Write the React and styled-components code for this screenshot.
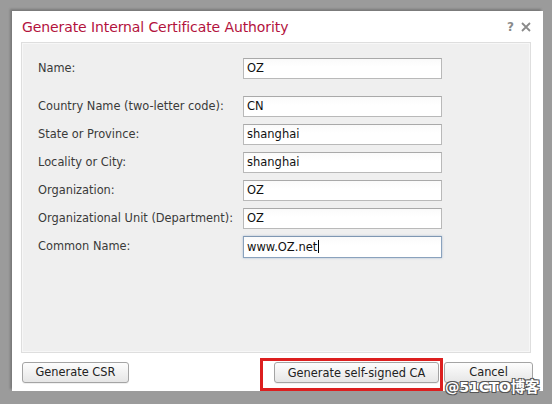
import React from "react";
import styled, { createGlobalStyle } from "styled-components";

const Global = createGlobalStyle`
  html, body { margin: 0; padding: 0; background: #9b9b9b; }
  body { width: 552px; height: 404px; overflow: hidden; font-family: "DejaVu Sans", Verdana, sans-serif; }
`;

const Page = styled.div`
  position: relative;
  width: 552px;
  height: 404px;
  padding: 11px 0 0 12px;
  box-sizing: border-box;
`;

const Dialog = styled.div`
  width: 531px;
  height: 380px;
  background: #ffffff;
  box-shadow: -2px -2px 2px rgba(60, 60, 60, 0.35);
  display: flex;
  flex-direction: column;
  box-sizing: border-box;
`;

const Header = styled.div`
  height: 31px;
  display: flex;
  align-items: center;
  justify-content: space-between;
  padding: 0 12px 0 10px;
  box-sizing: border-box;
`;

const Title = styled.h1`
  margin: 0;
  font-family: "DejaVu Sans", Verdana, sans-serif;
  font-weight: normal;
  font-size: 14px;
  color: #b3123d;
  letter-spacing: -0.1px;
  padding-top: 2px;
`;

const HeaderTools = styled.div`
  display: flex;
  align-items: center;
  gap: 7px;
  color: #8a8a8a;
  font-weight: bold;
  font-size: 12px;
  padding-top: 2px;
`;

const Panel = styled.div`
  margin: 0 12px 0 9px;
  height: 311px;
  background: #efefef;
  border: 1px solid #dedede;
  box-shadow: inset 0 0 0 1px #f7f7f7;
  box-sizing: border-box;
  padding: 15px 0 0 16px;
`;

const Form = styled.div`
  display: grid;
  grid-template-columns: 205px 199px;
  row-gap: 7px;
`;

const Label = styled.label`
  font-size: 11.4px;
  color: #3a3a3a;
  display: flex;
  align-items: center;
  height: 21px;
  white-space: nowrap;
  margin-top: ${p => (p.$gap ? "10px" : "0")};
`;

const Field = styled.div`
  height: ${p => (p.$focus ? "22px" : "21px")};
  box-sizing: border-box;
  border: 1px solid ${p => (p.$focus ? "#8aa2bd" : "#b9b9b9")};
  border-top-color: ${p => (p.$focus ? "#7f97b2" : "#a9a9a9")};
  box-shadow: ${p => (p.$focus ? "0 0 2px rgba(120,150,190,0.6)" : "none")};
  background: linear-gradient(#fafafa, #ffffff 40%);
  font-size: 11.5px;
  color: #111;
  display: flex;
  align-items: center;
  padding-left: 3px;
  margin-top: ${p => (p.$gap ? "10px" : "0")};
`;

const Caret = styled.span`
  display: inline-block;
  width: 1px;
  height: 13px;
  background: #000;
  margin-left: 1px;
`;

const Footer = styled.div`
  flex: 1;
  display: flex;
  justify-content: space-between;
  align-items: flex-start;
  padding: 5px 10px 0 10px;
`;

const Button = styled.button`
  height: 21px;
  width: ${p => p.$w}px;
  margin-top: ${p => p.$mt || 0}px;
  border: 1px solid #a4a4a4;
  border-radius: 3px;
  background: linear-gradient(#fdfdfd, #e6e6e6);
  box-shadow: 0 1px 0 rgba(0,0,0,0.06);
  font-family: "DejaVu Sans", Verdana, sans-serif;
  font-size: 11.4px;
  color: #222;
  padding: 0;
  cursor: pointer;
`;

const RightGroup = styled.div`
  display: flex;
  align-items: flex-start;
  gap: 1px;
`;

const Highlight = styled.div`
  border: 3px solid #dc1f1f;
  padding: 1px 1px 5px 11px;
`;

const Watermark = styled.div`
  position: absolute;
  left: 445px;
  top: 375px;
  font-family: "DejaVu Sans", "Noto Sans CJK SC", sans-serif;
  font-size: 14.5px;
  font-weight: bold;
  color: #ffffff;
  letter-spacing: -0.3px;
  text-shadow: -1px -1px 0 #555, 1px -1px 0 #555, -1px 1px 0 #555, 1px 1px 0 #555;
`;

const rows = [
  ["Name:", "OZ", false],
  ["Country Name (two-letter code):", "CN", true],
  ["State or Province:", "shanghai"],
  ["Locality or City:", "shanghai"],
  ["Organization:", "OZ"],
  ["Organizational Unit (Department):", "OZ"],
];

export default function App() {
  return (
    <Page>
      <Global />
      <Dialog>
        <Header>
          <Title>Generate Internal Certificate Authority</Title>
          <HeaderTools>
            <span>?</span>
            <svg width="10" height="10" viewBox="0 0 10 10">
              <path d="M1 1 L9 9 M9 1 L1 9" stroke="#8a8a8a" strokeWidth="1.8" />
            </svg>
          </HeaderTools>
        </Header>
        <Panel>
          <Form>
            {rows.map(([l, v, gap]) => (
              <React.Fragment key={l}>
                <Label $gap={gap}>{l}</Label>
                <Field $gap={gap}>{v}</Field>
              </React.Fragment>
            ))}
            <Label>Common Name:</Label>
            <Field $focus>
              www.OZ.net<Caret />
            </Field>
          </Form>
        </Panel>
        <Footer>
          <Button $w={107} $mt={4}>Generate CSR</Button>
          <RightGroup>
            <Highlight>
              <Button $w={165}>Generate self-signed CA</Button>
            </Highlight>
            <Button $w={89} $mt={4}>Cancel</Button>
          </RightGroup>
        </Footer>
      </Dialog>
      <Watermark>@51CTO博客</Watermark>
    </Page>
  );
}
